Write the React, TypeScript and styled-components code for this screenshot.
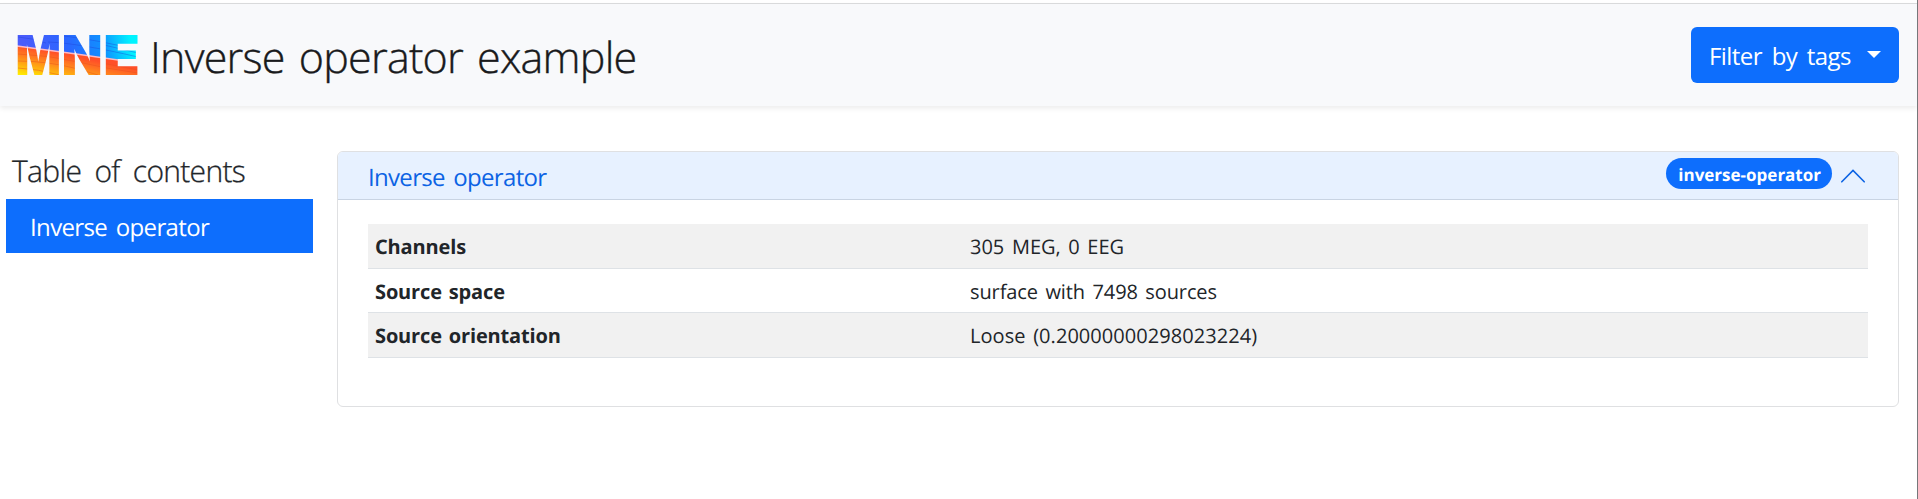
import React from 'react';
import styled, { createGlobalStyle } from 'styled-components';

const GlobalStyle = createGlobalStyle`
  *, *::before, *::after { box-sizing: border-box; }
  body {
    margin: 0;
    background: #fff;
    color: #212529;
    font-family: "Open Sans", "Noto Sans", "Noto Sans CJK KR", sans-serif;
    text-rendering: geometricPrecision;
  }
`;

const Page = styled.div`
  height: 499px;
  padding-top: 3px;
  border-right: 1px solid #76777a;
  overflow: hidden;
`;

const Header = styled.header`
  display: flex;
  align-items: center;
  height: 103px;
  padding: 0 18px;
  border-top: 1px solid #d9dadb;
  background: #f8f9fb;
  box-shadow: 0 2.5px 5px rgba(0, 0, 0, 0.075);
`;

const Logo = styled.svg`
  display: block;
  width: 120px;
  height: 40px;
  overflow: visible;
  font-family: Inter, "Open Sans", sans-serif;
  font-size: 55px;
  font-weight: 900;
`;

const Title = styled.h1`
  flex: 1;
  margin: 4px 0 0 12px;
  font-size: 43px;
  font-weight: 300;
  line-height: 60px;
  letter-spacing: -0.77px;
  word-spacing: 3.8px;
  color: #191a1c;
  -webkit-text-stroke: 0.4px #191a1c;
`;

const FilterButton = styled.button`
  display: flex;
  align-items: center;
  width: 208px;
  height: 56px;
  padding: 1px 18px 0 18px;
  border: 0;
  border-radius: 6px;
  background: #0d6efd;
  color: #fff;
  font: 400 24px "Open Sans", sans-serif;
  letter-spacing: -0.55px;
  word-spacing: 3.9px;
  white-space: nowrap;
`;

const Caret = styled.span`
  margin: -3px 0 0 auto;
  border: 7px solid transparent;
  border-top-color: #fff;
  border-bottom: 0;
`;

const Main = styled.main`
  display: flex;
  align-items: flex-start;
  gap: 24px;
  padding: 45px 18px 0 6px;
`;

const Sidebar = styled.nav`
  width: 307px;
`;

const SidebarTitle = styled.h2`
  margin: 0;
  height: 48px;
  padding-left: 6px;
  font-size: 30px;
  font-weight: 300;
  line-height: 39px;
  letter-spacing: -0.7px;
  word-spacing: 6.1px;
  -webkit-text-stroke: 0.3px #212529;
`;

const SidebarLink = styled.a`
  display: block;
  height: 54px;
  padding: 3px 0 0 24px;
  background: #0d6efd;
  color: #fff;
  font-size: 24px;
  line-height: 52px;
  letter-spacing: -0.63px;
  word-spacing: 2.9px;
`;

const Card = styled.section`
  flex: 1;
  height: 256px;
  border: 1px solid #dfe0e2;
  border-radius: 6px;
  overflow: hidden;
`;

const CardHeader = styled.div`
  display: flex;
  align-items: center;
  height: 48px;
  padding: 0 33px 0 30px;
  border-bottom: 1px solid #c9d4e3;
  background: #e7f1ff;
  color: #0c63e4;
`;

const CardTitle = styled.span`
  flex: 1;
  padding-top: 4px;
  font-size: 24px;
  line-height: 42px;
  letter-spacing: -0.68px;
  word-spacing: 2.9px;
`;

const Badge = styled.span`
  height: 31px;
  margin: -4px 9px 0 0;
  padding: 0 11px 0 12px;
  border-radius: 16px;
  background: #0d6efd;
  color: #fff;
  font-size: 17px;
  font-weight: 700;
  line-height: 33px;
`;

const Chevron = styled.svg`
  display: block;
  width: 24px;
  height: 14px;
`;

const Rows = styled.dl`
  margin: 24px 30px 0;
`;

const Row = styled.div<{ $striped: boolean; $height: number }>`
  display: flex;
  height: ${(p) => p.$height}px;
  padding-left: 7px;
  border-bottom: 1px solid #dee2e6;
  background: ${(p) => (p.$striped ? '#f1f1f1' : '#fff')};
  font-size: 20px;
  line-height: 45px;
`;

const Term = styled.dt`
  width: 595px;
  font-weight: 700;
  letter-spacing: -0.14px;
  word-spacing: 1.8px;
`;

const Value = styled.dd<{ $tracking: number }>`
  margin: 0;
  letter-spacing: ${(p) => p.$tracking}px;
  word-spacing: 2.4px;
`;

const rows = [
  { term: 'Channels', value: '305 MEG, 0 EEG', height: 45, tracking: 0 },
  { term: 'Source space', value: 'surface with 7498 sources', height: 44, tracking: -0.1 },
  { term: 'Source orientation', value: 'Loose (0.20000000298023224)', height: 45, tracking: 0.05 },
];

const LogoMark = () => (
  <Logo viewBox="0 0 120 40" aria-label="MNE">
    <defs>
      <linearGradient id="cool" gradientUnits="userSpaceOnUse" x1="10" y1="24" x2="112" y2="0">
        <stop offset="0" stopColor="#4a5cfb" />
        <stop offset="0.4" stopColor="#2a66ff" />
        <stop offset="0.72" stopColor="#1090ff" />
        <stop offset="1" stopColor="#00f4ff" />
      </linearGradient>
      <linearGradient id="warm" gradientUnits="userSpaceOnUse" x1="0" y1="40" x2="6" y2="11">
        <stop offset="0" stopColor="#fff200" />
        <stop offset="0.35" stopColor="#ffb010" />
        <stop offset="0.7" stopColor="#ff7a20" />
        <stop offset="1" stopColor="#ff5028" />
      </linearGradient>
      <pattern id="waves" patternUnits="userSpaceOnUse" x="-1" width="122" height="40" viewBox="-1 0 122 40">
        <rect x="-1" width="122" height="40" fill="url(#cool)" />
        <path d="M-1 11 Q60 19 121 28 V40 H-1Z" fill="url(#warm)" />
        <path d="M-1 11 Q60 19 121 28" fill="none" stroke="#ffb9c4" strokeWidth="1.6" />
        <g fill="none" stroke="#1c3fd8" strokeOpacity="0.5" strokeWidth="0.8">
          <path d="M0 2 Q14 3 28 8" />
          <path d="M30 7 Q60 8 120 22" />
          <path d="M46 1 Q80 5 120 15" />
          <path d="M86 10 L120 18" />
        </g>
        <g fill="none" stroke="#e8501c" strokeOpacity="0.6" strokeWidth="0.8">
          <path d="M0 19 Q30 20 60 27 T120 38" />
          <path d="M0 26 Q30 26 60 34 L80 40" />
          <path d="M0 33 Q20 34 42 40" />
          <path d="M84 28 L120 35" />
        </g>
      </pattern>
    </defs>
    <g fill="url(#waves)">
      <text x="-2.4" y="40" textLength="45.6" lengthAdjust="spacingAndGlyphs">M</text>
      <text x="43.6" y="40" textLength="41.2" lengthAdjust="spacingAndGlyphs">N</text>
      <text x="85" y="40" textLength="37" lengthAdjust="spacingAndGlyphs">E</text>
    </g>
  </Logo>
);

export default function App() {
  return (
    <>
      <GlobalStyle />
      <Page>
        <Header>
          <LogoMark />
          <Title>Inverse operator example</Title>
          <FilterButton>
            Filter by tags
            <Caret />
          </FilterButton>
        </Header>
        <Main>
          <Sidebar>
            <SidebarTitle>Table of contents</SidebarTitle>
            <SidebarLink>Inverse operator</SidebarLink>
          </Sidebar>
          <Card>
            <CardHeader>
              <CardTitle>Inverse operator</CardTitle>
              <Badge>inverse-operator</Badge>
              <Chevron viewBox="0 0 24 14" fill="none" stroke="#0c63e4" strokeWidth="1.6" strokeLinecap="round">
                <path d="M0.8 12.8 L12 1.4 L23.2 12.8" />
              </Chevron>
            </CardHeader>
            <Rows>
              {rows.map((row, i) => (
                <Row key={row.term} $striped={i % 2 === 0} $height={row.height}>
                  <Term>{row.term}</Term>
                  <Value $tracking={row.tracking}>{row.value}</Value>
                </Row>
              ))}
            </Rows>
          </Card>
        </Main>
      </Page>
    </>
  );
}
